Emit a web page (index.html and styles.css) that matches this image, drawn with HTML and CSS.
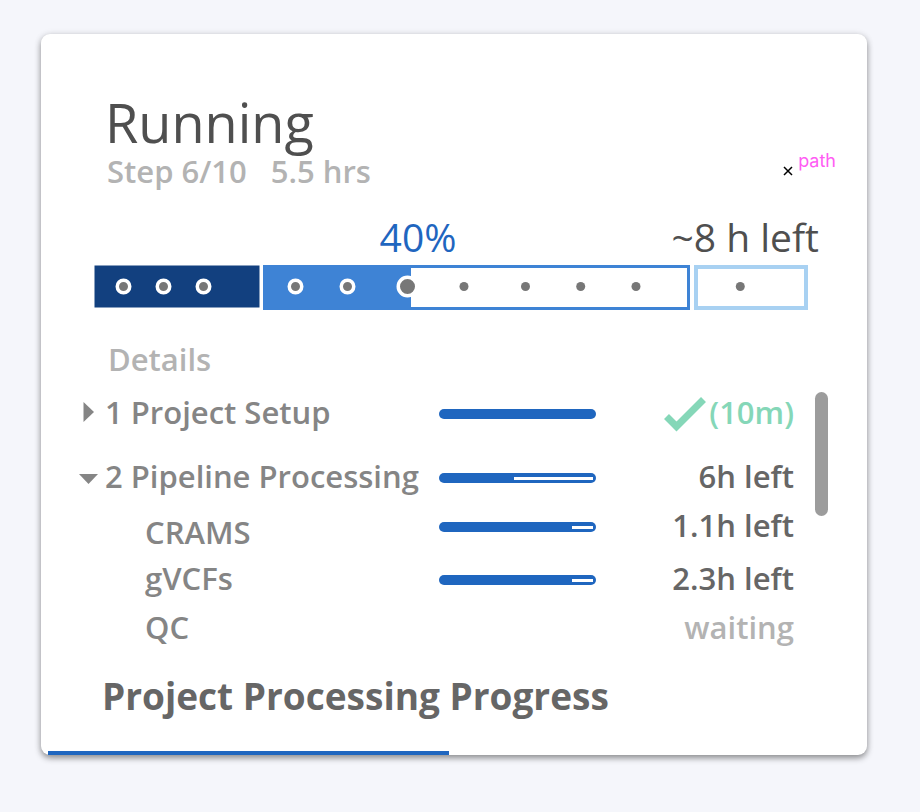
FILE: index.html
```html
<!DOCTYPE html>
<html lang="en">
<head>
<meta charset="utf-8">
<meta name="viewport" content="width=device-width, initial-scale=1">
<title>Project Processing Progress</title>
<link rel="stylesheet" href="styles.css">
</head>
<body>
<main class="card">
  <div class="annotation">
    <svg class="annotation-mark" viewBox="0 0 10 10" aria-hidden="true"><path d="M1 1 9 9M9 1 1 9"/></svg>
    <span>path</span>
  </div>

  <header class="status">
    <h1 class="status-title">Running</h1>
    <p class="status-meta"><span>Step 6/10</span><span>5.5 hrs</span></p>
  </header>

  <section class="overview">
    <div class="overview-labels">
      <span class="percent">40%</span>
      <span class="remaining">~8 h left</span>
    </div>
    <svg class="timeline" viewBox="0 0 714 45" role="img" aria-label="Step timeline">
      <rect x="0.5" y="0.5" width="165" height="42" class="seg-done"/>
      <rect x="170.5" y="1.5" width="424" height="42" class="seg-active"/>
      <rect x="169" y="0" width="148" height="45" class="seg-fill"/>
      <rect x="602" y="2" width="110" height="41" class="seg-next"/>
      <g class="ring">
        <circle cx="29.5" cy="21.5" r="6.25"/>
        <circle cx="69.5" cy="21.5" r="6.25"/>
        <circle cx="109.5" cy="21.5" r="6.25"/>
        <circle cx="201.5" cy="21.5" r="6.25"/>
        <circle cx="253.5" cy="21.5" r="6.25"/>
        <circle cx="313.5" cy="21.5" r="9.25"/>
      </g>
      <g class="dot">
        <circle cx="370" cy="21.5" r="4.5"/>
        <circle cx="431.5" cy="21.5" r="4.5"/>
        <circle cx="486.7" cy="21.5" r="4.5"/>
        <circle cx="542" cy="21.5" r="4.5"/>
        <circle cx="646.3" cy="21.5" r="4.5"/>
      </g>
    </svg>
  </section>

  <section class="details">
    <h2 class="details-title">Details</h2>
    <div class="details-body">
      <ul class="tree">
        <li class="row">
          <button class="toggle" type="button" aria-expanded="false" aria-label="Expand Project Setup">
            <svg class="caret" viewBox="0 0 20 20"><path d="M4.5 0 15 10 4.5 20z"/></svg>
          </button>
          <span class="name">1 Project Setup</span>
          <div class="bar" role="progressbar" aria-valuenow="100"></div>
          <span class="time time-done">
            <svg class="check" viewBox="0 0 42 36" aria-hidden="true"><path d="M2.500 20.500 12.500 30.500 39.500 3.500"/></svg>(10m)
          </span>
        </li>
        <li class="row row-open">
          <button class="toggle" type="button" aria-expanded="true" aria-label="Collapse Pipeline Processing">
            <svg class="caret" viewBox="0 0 20 20"><path d="M0 8H19L9.500 18z"/></svg>
          </button>
          <span class="name">2 Pipeline Processing</span>
          <div class="bar" role="progressbar" aria-valuenow="48"><div class="bar-rest" style="width:52%"></div></div>
          <span class="time">6h left</span>
        </li>
        <li class="row row-first">
          <span class="name name-sub">CRAMS</span>
          <div class="bar" role="progressbar" aria-valuenow="86"><div class="bar-rest" style="width:14%"></div></div>
          <span class="time">1.1h left</span>
        </li>
        <li class="row row-second">
          <span class="name name-sub">gVCFs</span>
          <div class="bar" role="progressbar" aria-valuenow="86"><div class="bar-rest" style="width:14%"></div></div>
          <span class="time">2.3h left</span>
        </li>
        <li class="row row-third">
          <span class="name name-sub">QC</span>
          <span class="time time-waiting">waiting</span>
        </li>
      </ul>
      <div class="scroll-thumb"></div>
    </div>
  </section>

  <h2 class="card-title">Project Processing Progress</h2>
  <div class="card-progress"></div>
</main>
</body>
</html>
```
FILE: styles.css
```css
* { box-sizing: border-box; }

body {
  margin: 0;
  padding: 34px 53px 56px 41px;
  background: #f5f6fb;
  font-family: "Open Sans", "Noto Sans", sans-serif;
  font-size: 31px;
  font-weight: 550;
  line-height: 38px;
  color: #666;
}

h1, h2, p, ul { margin: 0; padding: 0; }
ul { list-style: none; }
svg { display: block; }

.card {
  position: relative;
  padding: 58px 39px 0 38px;
  border-radius: 9px;
  background: #fff;
  box-shadow: 0 3px 6px rgba(0, 0, 0, 0.42), 0 0 8px rgba(0, 0, 0, 0.06);
}

.annotation {
  position: absolute;
  top: 112px;
  right: 31px;
  display: flex;
  align-items: center;
  gap: 5px;
  font: 400 18px/22px Inter, sans-serif;
  color: #ff5cf4;
}
.annotation-mark {
  width: 10px;
  height: 10px;
  margin-top: 20px;
  fill: none;
  stroke: #000;
  stroke-width: 1.5;
}

.status { padding-left: 28px; }
.status-title {
  margin-left: -2px;
  font-size: 54px;
  font-weight: 400;
  line-height: 60px;
  color: #4f4f4f;
}
.status-meta {
  display: flex;
  gap: 24px;
  color: #b3b3b3;
}

.overview {
  margin-top: 23px;
  padding: 0 20px 0 15px;
}
.overview-labels {
  display: flex;
  justify-content: space-between;
  margin-right: -11px;
  padding-left: 40%;
  font-size: 39px;
  font-weight: 400;
  line-height: 48px;
  color: #4f4f4f;
}
.percent { color: #1f66bf; }

.timeline {
  width: 100%;
  margin-top: 4px;
}
.seg-done { fill: #12407f; }
.seg-active { fill: #fff; stroke: #3e83d5; stroke-width: 3; }
.seg-fill { fill: #3e83d5; }
.seg-next { fill: #fff; stroke: #a8d1f2; stroke-width: 4; }
.ring circle { fill: #777; stroke: #fff; stroke-width: 3.5; }
.dot circle { fill: #777; }

.details { margin-top: 30px; }
.details-title {
  padding-left: 29px;
  font-size: 31px;
  font-weight: 550;
  color: #b3b3b3;
}
.details-body {
  display: flex;
  gap: 21px;
  margin-top: 14px;
}
.tree {
  flex: 1;
  padding-top: 1px;
}
.scroll-thumb {
  width: 13px;
  height: 124px;
  border-radius: 7px;
  background: #9c9c9c;
}

.row {
  display: grid;
  grid-template-columns: 26px 1fr 157px 198px;
  align-items: start;
}
.row-open { margin-top: 25px; }
.row-first { margin-top: 11px; }
.row-second { margin-top: 8px; }
.row-third { margin-top: 11px; }

.toggle {
  height: 38px;
  padding: 0;
  border: 0;
  background: none;
}
.caret {
  width: 20px;
  height: 20px;
  fill: #858585;
}
.name {
  grid-column: 2;
  color: #858585;
  white-space: nowrap;
}
.name-sub { padding-left: 40px; }
.row-first .name { padding-top: 7px; }

.bar {
  grid-column: 3;
  display: flex;
  justify-content: flex-end;
  height: 10px;
  margin-top: 16px;
  padding: 4px 3px 3px;
  border-radius: 5px;
  background: #1f66bf;
}
.bar-rest { background: #fff; }

.time {
  grid-column: 4;
  display: flex;
  justify-content: flex-end;
}
.time-done { color: #85d7b8; }
.time-waiting { color: #b3b3b3; }
.check {
  width: 42px;
  height: 36px;
  margin: 3px 3px 0 0;
  fill: none;
  stroke: #85d7b8;
  stroke-width: 7;
}

.card-title {
  margin-top: 26px;
  padding-left: 23px;
  font-size: 37px;
  font-weight: 700;
  line-height: 48px;
}
.card-progress {
  width: 401px;
  height: 4px;
  margin: 31px 0 0 -31px;
  background: #1f66bf;
}
```
